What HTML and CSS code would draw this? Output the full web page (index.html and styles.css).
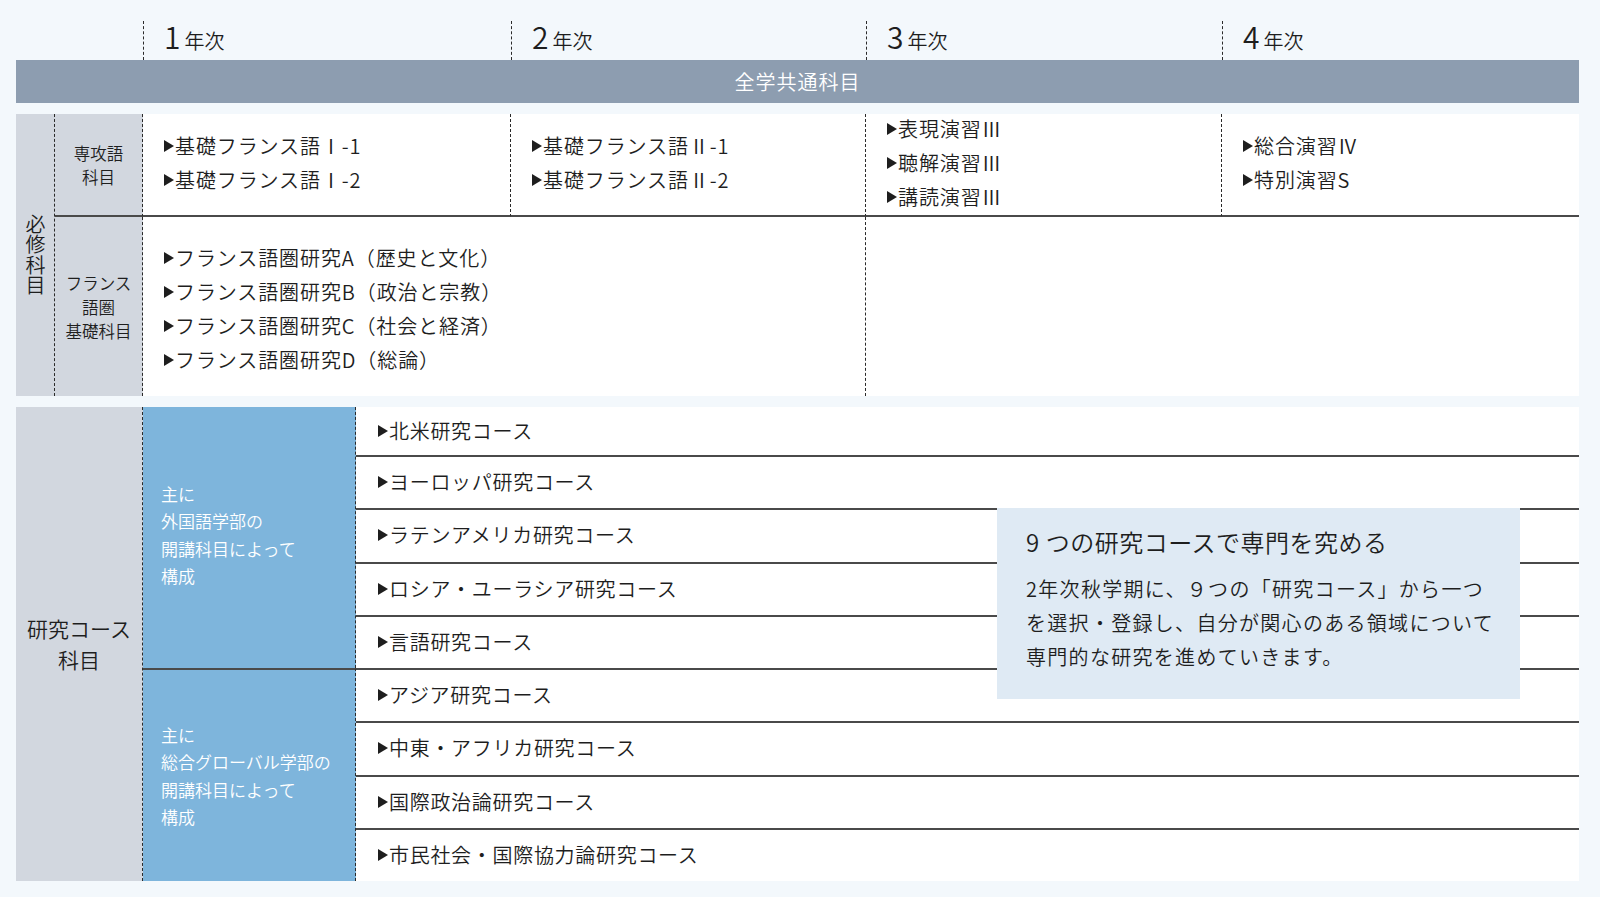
FILE: index.html
```html
<!DOCTYPE html>
<html lang="ja">
<head>
<meta charset="utf-8">
<title>カリキュラム</title>
<link rel="stylesheet" href="styles.css">
</head>
<body>
<div class="page">
  <div class="years">
    <div class="yr-spacer"></div>
    <div class="yr"><span class="num">1</span><span class="unit">年次</span></div>
    <div class="yr"><span class="num">2</span><span class="unit">年次</span></div>
    <div class="yr"><span class="num">3</span><span class="unit">年次</span></div>
    <div class="yr"><span class="num">4</span><span class="unit">年次</span></div>
  </div>

  <div class="common">全学共通科目</div>

  <div class="req">
    <div class="req-label"><span class="vert">必修科目</span></div>
    <div class="sub sub1">専攻語<br>科目</div>
    <div class="cell c1 r1">
      <div class="item">基礎フランス語Ⅰ-1</div>
      <div class="item">基礎フランス語Ⅰ-2</div>
    </div>
    <div class="cell c2 r1">
      <div class="item">基礎フランス語Ⅱ-1</div>
      <div class="item">基礎フランス語Ⅱ-2</div>
    </div>
    <div class="cell c3 r1">
      <div class="item">表現演習Ⅲ</div>
      <div class="item">聴解演習Ⅲ</div>
      <div class="item">講読演習Ⅲ</div>
    </div>
    <div class="cell c4 r1">
      <div class="item">総合演習Ⅳ</div>
      <div class="item">特別演習S</div>
    </div>
    <div class="sub sub2">フランス<br>語圏<br>基礎科目</div>
    <div class="cell c12 r2">
      <div class="item">フランス語圏研究A（歴史と文化）</div>
      <div class="item">フランス語圏研究B（政治と宗教）</div>
      <div class="item">フランス語圏研究C（社会と経済）</div>
      <div class="item">フランス語圏研究D（総論）</div>
    </div>
    <div class="cell c34 r2"></div>
  </div>

  <div class="research">
    <div class="rs-label">研究コース<br>科目</div>
    <div class="blue blue1">主に<br>外国語学部の<br>開講科目によって<br>構成</div>
    <div class="blue blue2">主に<br>総合グローバル学部の<br>開講科目によって<br>構成</div>
    <div class="course first"><span class="item">北米研究コース</span></div>
    <div class="course"><span class="item">ヨーロッパ研究コース</span></div>
    <div class="course"><span class="item">ラテンアメリカ研究コース</span></div>
    <div class="course"><span class="item">ロシア・ユーラシア研究コース</span></div>
    <div class="course"><span class="item">言語研究コース</span></div>
    <div class="course"><span class="item">アジア研究コース</span></div>
    <div class="course"><span class="item">中東・アフリカ研究コース</span></div>
    <div class="course"><span class="item">国際政治論研究コース</span></div>
    <div class="course"><span class="item">市民社会・国際協力論研究コース</span></div>

    <div class="callout">
      <div class="callout-title"><span class="digit">9</span>つの研究コースで専門を究める</div>
      <div class="callout-body">2年次秋学期に、９つの「研究コース」から一つ<br>を選択・登録し、自分が関心のある領域について<br>専門的な研究を進めていきます。</div>
    </div>
  </div>
</div>
</body>
</html>
```

FILE: styles.css
```css
* { box-sizing: border-box; }

html, body {
  margin: 0;
  padding: 0;
  background: #f3f8fc;
}

body {
  font-family: "Noto Sans CJK JP", "Noto Sans", sans-serif;
  font-weight: 350;
  color: #1e1e1e;
}

.page {
  width: 1600px;
  padding: 21px 21px 0 16px;
}

/* ---------- year header ---------- */
.years {
  display: grid;
  grid-template-columns: 127px 368px 355px 356px 1fr;
  height: 39px;
}

.yr {
  border-left: 1px dashed #2a2a2a;
  padding-left: 20px;
  display: flex;
  align-items: baseline;
}

.yr .num {
  font-size: 30px;
  line-height: 30px;
  margin-right: 4px;
}

.yr .unit {
  font-size: 20px;
  line-height: 30px;
}

/* ---------- common bar ---------- */
.common {
  height: 43px;
  background: #8d9db0;
  color: #fff;
  font-size: 20px;
  letter-spacing: 1px;
  display: flex;
  align-items: center;
  justify-content: center;
}

/* ---------- required section ---------- */
.req {
  margin-top: 11px;
  display: grid;
  grid-template-columns: 39px 88px 368px 355px 356px 1fr;
  grid-template-rows: 103px 179px;
}

.req-label {
  grid-column: 1;
  grid-row: 1 / 3;
  background: #d2d7df;
  border-right: 1px dashed #2a2a2a;
  display: flex;
  align-items: center;
  justify-content: center;
}

.vert {
  writing-mode: vertical-rl;
  text-orientation: upright;
  font-size: 20px;
  letter-spacing: 0.5px;
  line-height: 1;
}

.sub {
  grid-column: 2;
  background: #d2d7df;
  border-right: 1px dashed #2a2a2a;
  font-size: 16.5px;
  line-height: 24px;
  text-align: center;
  display: flex;
  align-items: center;
  justify-content: center;
}

.sub1 { grid-row: 1; border-bottom: 2px solid #4a4a4a; }
.sub2 { grid-row: 2; }

.cell {
  background: #fff;
  padding-left: 21px;
  display: flex;
  flex-direction: column;
  justify-content: center;
  font-size: 20px;
  letter-spacing: 0.9px;
  line-height: 34px;
}

.r1 { grid-row: 1; border-bottom: 2px solid #4a4a4a; padding-bottom: 4px; }
.r2 { grid-row: 2; }

.c1 { grid-column: 3; border-right: 1px dashed #2a2a2a; }
.c2 { grid-column: 4; border-right: 1px dashed #2a2a2a; }
.c3 { grid-column: 5; border-right: 1px dashed #2a2a2a; }
.c4 { grid-column: 6; }
.c12 { grid-column: 3 / 5; border-right: 1px dashed #2a2a2a; padding-top: 5px; }
.c34 { grid-column: 5 / 7; }

.item {
  white-space: nowrap;
}

.item::before {
  content: "";
  display: inline-block;
  width: 0;
  height: 0;
  border-left: 10px solid #1e1e1e;
  border-top: 6px solid transparent;
  border-bottom: 6px solid transparent;
  margin-right: 1px;
  vertical-align: 2px;
}

/* ---------- research section ---------- */
.research {
  position: relative;
  margin-top: 11px;
  display: grid;
  grid-template-columns: 127px 213px 1fr;
  grid-template-rows: 48px repeat(8, 1fr);
  height: 474px;
}

.rs-label {
  grid-column: 1;
  grid-row: 1 / 10;
  background: #d2d7df;
  border-right: 1px dashed #2a2a2a;
  font-size: 21px;
  line-height: 31px;
  text-align: center;
  display: flex;
  align-items: center;
  justify-content: center;
}

.blue {
  grid-column: 2;
  background: #7eb5dc;
  color: #fff;
  border-right: 1px dashed #2a2a2a;
  font-size: 17px;
  line-height: 27.5px;
  padding-left: 18px;
  display: flex;
  align-items: center;
  white-space: nowrap;
}

.blue1 { grid-row: 1 / 6; padding-bottom: 6px; }
.blue2 { grid-row: 6 / 10; border-top: 2px solid #4a4a4a; }

.course {
  grid-column: 3;
  background: #fff;
  border-top: 2px solid #4a4a4a;
  padding-left: 22px;
  padding-bottom: 2px;
  display: flex;
  align-items: center;
  font-size: 20px;
  letter-spacing: 0.7px;
}

.course.first { border-top: none; }

.callout {
  position: absolute;
  left: 981px;
  top: 101px;
  width: 523px;
  height: 191px;
  background: #dfeaf4;
  padding: 17px 0 0 29px;
  white-space: nowrap;
}

.callout-title {
  font-size: 24px;
  line-height: 34px;
  letter-spacing: 0.5px;
}

.callout-title .digit {
  margin-right: 6px;
}

.callout-body {
  margin-top: 13px;
  font-size: 20px;
  line-height: 34px;
  letter-spacing: 1.3px;
}
```
